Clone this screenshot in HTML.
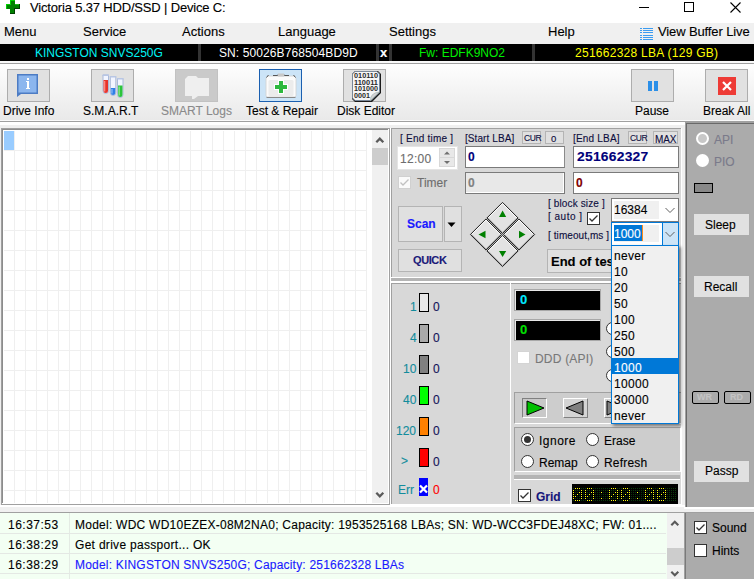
<!DOCTYPE html>
<html><head><meta charset="utf-8">
<style>
*{margin:0;padding:0;box-sizing:border-box}
html,body{width:754px;height:579px;overflow:hidden;background:#f0f0f0;font-family:"Liberation Sans",sans-serif;font-size:12px;color:#000}
.a{position:absolute}
.t{position:absolute;white-space:nowrap;line-height:1;-webkit-text-stroke:0.12px currentColor}
</style></head><body>
<!-- title bar -->
<div class="a" style="left:0;top:0;width:754px;height:23px;background:#fff"></div>
<svg class="a" style="left:6px;top:0" width="14" height="14" viewBox="0 0 14 14">
<path d="M4 0H9V4H14V9H9V14H4V9H0V4H4Z" fill="#008000"/>
<path d="M4 0H9V1H5V5H1V9H0V4H4Z" fill="#00d000"/>
<path d="M9 4H14V9H13V5H9Z" fill="#30ff30" opacity="0.5"/>
<path d="M13 4H14V9H9V14H4V13H8V8H13Z" fill="#004000"/>
</svg>
<div class="t" style="left:30px;top:1px;font-size:13px;letter-spacing:-0.17px">Victoria 5.37 HDD/SSD | Device C:</div>

<!-- window controls -->
<div class="a" style="left:639px;top:7px;width:10px;height:1px;background:#000"></div>
<div class="a" style="left:684px;top:2px;width:10px;height:10px;border:1px solid #000"></div>
<svg class="a" style="left:730px;top:2px" width="11" height="11" viewBox="0 0 11 11"><path d="M0.5 0.5L10.5 10.5M10.5 0.5L0.5 10.5" stroke="#000" stroke-width="1.1"/></svg>

<!-- menu bar -->
<div class="a" style="left:0;top:23px;width:754px;height:21px;background:#f0f0f0"></div>
<div class="t" style="left:4px;top:25px;font-size:13px">Menu</div>
<div class="t" style="left:83px;top:25px;font-size:13px">Service</div>
<div class="t" style="left:182px;top:25px;font-size:13px">Actions</div>
<div class="t" style="left:278px;top:25px;font-size:13px">Language</div>
<div class="t" style="left:389px;top:25px;font-size:13px">Settings</div>
<div class="t" style="left:548px;top:25px;font-size:13px">Help</div>
<div class="t" style="left:658px;top:25px;font-size:13px;letter-spacing:-0.12px">View Buffer Live</div>
<svg class="a" style="left:640px;top:27px" width="14" height="14" viewBox="0 0 14 14">
<g fill="#3c9cf0"><rect x="0" y="1" width="2" height="1"/><rect x="3" y="1" width="10" height="1"/>
<rect x="0" y="3" width="2" height="1"/><rect x="3" y="3" width="10" height="1"/>
<rect x="0" y="5" width="2" height="1"/><rect x="3" y="5" width="10" height="1"/>
<rect x="0" y="8" width="2" height="1"/><rect x="3" y="8" width="10" height="1"/>
<rect x="0" y="10" width="2" height="1"/><rect x="3" y="10" width="10" height="1"/>
<rect x="0" y="12" width="2" height="1"/><rect x="3" y="12" width="10" height="1"/></g></svg>
<!-- info bar -->
<div class="a" style="left:0;top:44px;width:754px;height:17px;background:#000"></div>
<div class="t" style="left:35px;top:47px;font-size:12px;color:#00f4f4;-webkit-text-stroke:0">KINGSTON SNVS250G</div>
<div class="a" style="left:198px;top:44px;width:3px;height:17px;background:#333"></div>
<div class="t" style="left:219px;top:47px;font-size:12px;color:#fff;-webkit-text-stroke:0;letter-spacing:0.1px">SN: 50026B768504BD9D</div>
<div class="a" style="left:376px;top:44px;width:3px;height:17px;background:#333"></div>
<div class="t" style="left:380px;top:46px;font-size:13px;font-weight:bold;color:#fff">x</div>
<div class="a" style="left:389px;top:44px;width:3px;height:17px;background:#333"></div>
<div class="t" style="left:419px;top:47px;font-size:12px;color:#00f000;-webkit-text-stroke:0">Fw: EDFK9NO2</div>
<div class="a" style="left:532px;top:44px;width:3px;height:17px;background:#333"></div>
<div class="t" style="left:575px;top:47px;font-size:12px;color:#ffff00;-webkit-text-stroke:0;letter-spacing:0.27px">251662328 LBA (129 GB)</div>
<!-- toolbar -->
<div class="a" style="left:0;top:61px;width:754px;height:2px;background:#f8f8f8"></div>
<div class="a" style="left:0;top:63px;width:754px;height:1px;background:#a0a0a0"></div>
<div class="a" style="left:0;top:64px;width:754px;height:56px;background:linear-gradient(#fefefe,#e9e9e9)"></div><div class="a" style="left:0;top:120px;width:754px;height:1px;background:#fafafa"></div>
<div class="a" style="left:0;top:121px;width:754px;height:1px;background:#a0a0a0"></div>
<div class="a" style="left:0;top:122px;width:754px;height:3px;background:#e8e8e8"></div>
<div class="a" style="left:0;top:125px;width:754px;height:3px;background:#fff"></div>


<!-- main bg -->
<div class="a" style="left:0;top:122px;width:754px;height:3px;background:#fff"></div>
<div class="a" style="left:0;top:125px;width:685px;height:388px;background:#f0f0f0"></div>
<!-- left grid panel -->
<div class="a" style="left:1px;top:128px;width:389px;height:377px;background:#a0a0a0"></div>
<div class="a" style="left:2px;top:129px;width:387px;height:375px;background:#fff"></div>
<div class="a" style="left:2px;top:129px;width:386px;height:374px;background:#8c8c8c"></div>
<div class="a" style="left:3px;top:130px;width:369px;height:373px;background:#fff"></div>
<div class="a" style="left:3px;top:130px;width:364px;height:373px;background-color:#fff;background-image:linear-gradient(to right,rgba(0,0,0,0) 10px,#efefef 10px),linear-gradient(to bottom,rgba(0,0,0,0) 19px,#efefef 19px);background-size:11px 20px,11px 20px;background-position:1px 1px,1px 1px"></div>
<div class="a" style="left:3px;top:130px;width:1px;height:373px;background:#fff"></div>
<div class="a" style="left:3px;top:130px;width:369px;height:1px;background:#fff"></div>
<div class="a" style="left:4px;top:131px;width:10px;height:19px;background:#99ccff"></div>
<!-- grid scrollbar -->
<div class="a" style="left:372px;top:130px;width:16px;height:373px;background:#f0f0f0"></div>
<div class="a" style="left:372px;top:148px;width:16px;height:17px;background:#cdcdcd"></div>
<svg class="a" style="left:375px;top:136px" width="10" height="8" viewBox="0 0 10 8"><path d="M1.3 6.2L4.8 2.7L8.3 6.2" fill="none" stroke="#5a5a5a" stroke-width="2.3"/></svg>
<svg class="a" style="left:375px;top:491px" width="10" height="8" viewBox="0 0 10 8"><path d="M1.3 1.8L4.8 5.3L8.3 1.8" fill="none" stroke="#5a5a5a" stroke-width="2.3"/></svg>

<!-- right panel -->
<div class="a" style="left:390px;top:128px;width:292px;height:379px;background:#fff"></div>
<div class="a" style="left:391px;top:128px;width:290px;height:376px;background:#a0a0a0"></div>
<div class="a" style="left:392px;top:129px;width:289px;height:375px;background:#d8d8d8"></div>
<!-- top section separator -->
<div class="a" style="left:391px;top:277px;width:290px;height:1px;background:#fff"></div>
<div class="a" style="left:391px;top:278px;width:290px;height:3px;background:#b4b4b4"></div>
<div class="a" style="left:391px;top:281px;width:290px;height:2px;background:#fff"></div>
<div class="a" style="left:391px;top:283px;width:290px;height:1px;background:#a0a0a0"></div>
<div class="a" style="left:510px;top:283px;width:1px;height:221px;background:#fff"></div>

<!-- far right panel -->
<div class="a" style="left:685px;top:122px;width:69px;height:385px;background:#a0a0a0"></div>
<div class="a" style="left:686px;top:123px;width:68px;height:384px;background:#696969"></div>
<div class="a" style="left:687px;top:124px;width:67px;height:383px;background:#ababab"></div>
<div class="a" style="left:684px;top:507px;width:70px;height:2px;background:#fff"></div>
<div class="a" style="left:684px;top:509px;width:70px;height:3px;background:#f0f0f0"></div>
<div class="a" style="left:684px;top:512px;width:70px;height:1px;background:#a0a0a0"></div>

<!-- log -->
<div class="a" style="left:0;top:505px;width:685px;height:2px;background:#fff"></div>
<div class="a" style="left:0;top:512px;width:685px;height:1px;background:#a0a0a0"></div>
<div class="a" style="left:0;top:513px;width:684px;height:66px;background:#f3fff3"></div>
<div class="a" style="left:684px;top:513px;width:1px;height:66px;background:#a0a0a0"></div>
<div class="a" style="left:685px;top:513px;width:69px;height:66px;background:#ababab;border-left:1px solid #7a7a7a"></div>


<!-- RIGHT PANEL TOP -->
<div class="t" style="left:400px;top:134px;font-size:10px;letter-spacing:0.23px;color:#0e0e3e">[ End time ]</div>
<div class="a" style="left:397px;top:146px;width:61px;height:24px;background:#fff;border:1px solid #e4e4e4"></div>
<div class="t" style="left:400px;top:153px;font-size:12px;letter-spacing:0.3px;color:#6d6d6d">12:00</div>
<div class="a" style="left:439px;top:148px;width:16px;height:19px;background:#d8d8d8"></div><div class="a" style="left:440px;top:149px;width:14px;height:8px;background:#e8e8e8"></div>
<div class="a" style="left:440px;top:158px;width:14px;height:8px;background:#e8e8e8"></div>
<svg class="a" style="left:440px;top:149px" width="14" height="17" viewBox="0 0 14 17"><path d="M4 5.5L7 2.5L10 5.5Z" fill="#707070"/><path d="M4 12L7 15L10 12Z" fill="#707070"/></svg>
<div class="a" style="left:398px;top:176px;width:13px;height:13px;background:#fafafa;border:1px solid #d0d0d0"></div>
<svg class="a" style="left:398px;top:176px" width="13" height="13" viewBox="0 0 13 13"><path d="M2.5 6.5L5 9L10.5 3.5" fill="none" stroke="#c0c0c0" stroke-width="1.3"/></svg>
<div class="t" style="left:417px;top:177px;font-size:12px;color:#6d6d6d">Timer</div>

<div class="t" style="left:465px;top:134px;font-size:10px;letter-spacing:0.08px;color:#0e0e3e">[Start LBA]</div>
<div class="a" style="left:522px;top:131px;width:19px;height:13px;background:#e0e0e0;border:1px solid #b4b4b4"></div>
<div class="t" style="left:524px;top:134px;font-size:8.5px;letter-spacing:-0.35px;color:#0e0e3e">CUR</div>
<div class="a" style="left:545px;top:131px;width:19px;height:13px;background:#e0e0e0;border:1px solid #b4b4b4"></div>
<div class="t" style="left:551px;top:134px;font-size:9.5px;color:#0e0e3e">0</div>
<div class="a" style="left:465px;top:146px;width:100px;height:22px;background:#fff;border:1px solid #7a7a7a;border-right-color:#8a8a8a"></div>
<div class="t" style="left:468px;top:151px;font-size:12px;font-weight:bold;color:#00007a">0</div>
<div class="a" style="left:465px;top:172px;width:100px;height:22px;background:#e8e8e8;border:1px solid #7a7a7a;box-shadow:inset -1px -1px 0 #fff"></div>
<div class="t" style="left:468px;top:177px;font-size:12px;font-weight:bold;color:#808080">0</div>

<div class="t" style="left:573px;top:134px;font-size:10px;letter-spacing:0.19px;color:#0e0e3e">[End LBA]</div>
<div class="a" style="left:628px;top:131px;width:19px;height:13px;background:#e0e0e0;border:1px solid #b4b4b4"></div>
<div class="t" style="left:630px;top:134px;font-size:8.5px;letter-spacing:-0.35px;color:#0e0e3e">CUR</div>
<div class="a" style="left:653px;top:131px;width:25px;height:13px;background:#e0e0e0;border:1px solid #b4b4b4"></div>
<div class="t" style="left:655px;top:135px;font-size:10px;letter-spacing:-0.1px;color:#0e0e3e">MAX</div>
<div class="a" style="left:573px;top:146px;width:106px;height:22px;background:#fff;border:1px solid #7a7a7a"></div>
<div class="t" style="left:577px;top:151px;font-size:12px;font-weight:bold;letter-spacing:0.2px;transform:scaleX(1.155);transform-origin:0 0;color:#00007a">251662327</div>
<div class="a" style="left:573px;top:172px;width:106px;height:22px;background:#fff;border:1px solid #7a7a7a"></div>
<div class="t" style="left:576px;top:177px;font-size:12px;font-weight:bold;color:#800000">0</div>

<!-- scan buttons -->
<div class="a" style="left:398px;top:206px;width:45px;height:36px;background:#e0e0e0;border:1px solid #b4b4b4"></div>
<div class="t" style="left:407px;top:218px;font-size:12px;font-weight:bold;color:#1a1aff">Scan</div>
<div class="a" style="left:444px;top:206px;width:18px;height:36px;background:#e0e0e0;border:1px solid #b4b4b4"></div>
<svg class="a" style="left:446px;top:222px" width="12" height="7" viewBox="0 0 12 7"><path d="M1.5 0.5H9.5L5.5 5Z" fill="#000"/></svg>
<div class="a" style="left:398px;top:249px;width:64px;height:23px;background:#e0e0e0;border:1px solid #b4b4b4"></div>
<div class="t" style="left:413px;top:255px;font-size:11px;font-weight:bold;letter-spacing:-0.4px;color:#1a1a7a">QUICK</div>

<!-- diamond -->
<svg class="a" style="left:468px;top:200px" width="70" height="70" viewBox="0 0 70 70"><path d="M34.5 1.5L67.5 34.5L34.5 67.5L1.5 34.5Z" fill="#d8d8d8"/><path d="M34.5 2.4000000000000004L50.1 18.0L34.5 33.6L18.9 18.0Z" fill="#e2e2e2" stroke="#1a1a1a" stroke-width="1"/><path d="M20.1 18.0L34.5 3.5999999999999996L48.9 18.0" fill="none" stroke="#ffffff" stroke-width="1"/><path d="M20.1 18.0L34.5 32.4L48.9 18.0" fill="none" stroke="#a0a0a0" stroke-width="1"/><path d="M51.0 18.9L66.6 34.5L51.0 50.1L35.4 34.5Z" fill="#e2e2e2" stroke="#1a1a1a" stroke-width="1"/><path d="M36.6 34.5L51.0 20.1L65.4 34.5" fill="none" stroke="#ffffff" stroke-width="1"/><path d="M36.6 34.5L51.0 48.9L65.4 34.5" fill="none" stroke="#a0a0a0" stroke-width="1"/><path d="M34.5 35.4L50.1 51.0L34.5 66.6L18.9 51.0Z" fill="#e2e2e2" stroke="#1a1a1a" stroke-width="1"/><path d="M20.1 51.0L34.5 36.6L48.9 51.0" fill="none" stroke="#ffffff" stroke-width="1"/><path d="M20.1 51.0L34.5 65.4L48.9 51.0" fill="none" stroke="#a0a0a0" stroke-width="1"/><path d="M18.0 18.9L33.6 34.5L18.0 50.1L2.4000000000000004 34.5Z" fill="#e2e2e2" stroke="#1a1a1a" stroke-width="1"/><path d="M3.5999999999999996 34.5L18.0 20.1L32.4 34.5" fill="none" stroke="#ffffff" stroke-width="1"/><path d="M3.5999999999999996 34.5L18.0 48.9L32.4 34.5" fill="none" stroke="#a0a0a0" stroke-width="1"/><path d="M34.6 10.5L38.2 17H31Z" fill="#008000"/><path d="M34.6 57L38.2 51H31Z" fill="#008000"/><path d="M10.5 34.5L17.5 30.8V38.2Z" fill="#008000"/><path d="M57.5 34.5L51 30.8V38.2Z" fill="#008000"/></svg>

<div class="t" style="left:548px;top:199px;font-size:10px;letter-spacing:0.13px;color:#0e0e3e">[ block size ]</div>
<div class="t" style="left:548px;top:212px;font-size:10px;letter-spacing:0.5px;color:#0e0e3e">[ auto ]</div>
<div class="a" style="left:587px;top:212px;width:13px;height:13px;background:#fff;border:1px solid #333"></div>
<svg class="a" style="left:587px;top:212px" width="13" height="13" viewBox="0 0 13 13"><path d="M2.5 6.5L5 9L10.5 3.5" fill="none" stroke="#333" stroke-width="1.3"/></svg>
<div class="t" style="left:548px;top:231px;font-size:10px;letter-spacing:0.08px;color:#0e0e3e">[ timeout,ms ]</div>
<div class="a" style="left:547px;top:249px;width:70px;height:24px;background:#e0e0e0;border:1px solid #b4b4b4"></div>
<div class="t" style="left:551px;top:255px;font-size:13px;font-weight:bold;color:#000">End of test</div>

<!-- combos -->
<div class="a" style="left:611px;top:198px;width:68px;height:24px;background:#fff;border:1px solid #7a7a7a"></div>
<div class="a" style="left:614px;top:201px;width:45px;height:18px;background:#f0f0f0"></div>
<div class="t" style="left:614px;top:204px;font-size:12px;color:#000">16384</div>
<svg class="a" style="left:664px;top:206px" width="12" height="8" viewBox="0 0 12 8"><path d="M1.5 2L6 6.5L10.5 2" fill="none" stroke="#606060" stroke-width="1"/></svg>
<div class="a" style="left:611px;top:222px;width:68px;height:24px;background:#fff;border:1px solid #0078d7"></div>
<div class="a" style="left:614px;top:225px;width:45px;height:17px;background:#f0f0f0"></div>
<div class="a" style="left:614px;top:225px;width:28px;height:16px;background:#0078d7"></div>
<div class="a" style="left:642px;top:225px;width:1px;height:16px;background:#ff8c1a"></div>
<div class="t" style="left:614px;top:228px;font-size:12px;color:#fff">1000</div>
<div class="a" style="left:662px;top:222px;width:17px;height:24px;background:#cce4f7;border:1px solid #0078d7"></div>
<svg class="a" style="left:664px;top:230px" width="12" height="8" viewBox="0 0 12 8"><path d="M1.5 2L6 6.5L10.5 2" fill="none" stroke="#606060" stroke-width="1"/></svg>


<!-- MIDDLE LEFT counts -->
<div class="t" style="left:410px;top:301px;font-size:12px;color:#128c9c">1</div>
<div class="a" style="left:419px;top:293px;width:10px;height:19px;background:#e8e8e8;border:1px solid #000"></div>
<div class="t" style="left:433px;top:301px;font-size:12px;color:#14145a">0</div>
<div class="t" style="left:410px;top:332px;font-size:12px;color:#128c9c">4</div>
<div class="a" style="left:419px;top:324px;width:10px;height:19px;background:#a9a9a9;border:1px solid #000"></div>
<div class="t" style="left:433px;top:332px;font-size:12px;color:#14145a">0</div>
<div class="t" style="left:403px;top:363px;font-size:12px;color:#128c9c">10</div>
<div class="a" style="left:419px;top:355px;width:10px;height:19px;background:#808080;border:1px solid #000"></div>
<div class="t" style="left:433px;top:363px;font-size:12px;color:#14145a">0</div>
<div class="t" style="left:403px;top:394px;font-size:12px;color:#128c9c">40</div>
<div class="a" style="left:419px;top:386px;width:10px;height:19px;background:#00ff00;border:1px solid #000"></div>
<div class="t" style="left:433px;top:394px;font-size:12px;color:#14145a">0</div>
<div class="t" style="left:396px;top:425px;font-size:12px;color:#128c9c">120</div>
<div class="a" style="left:419px;top:417px;width:10px;height:19px;background:#ff8000;border:1px solid #000"></div>
<div class="t" style="left:433px;top:425px;font-size:12px;color:#14145a">0</div>
<div class="t" style="left:401px;top:455px;font-size:12px;color:#128c9c">&gt;</div>
<div class="a" style="left:419px;top:448px;width:10px;height:19px;background:#ff0000;border:1px solid #000"></div>
<div class="t" style="left:433px;top:456px;font-size:12px;color:#14145a">0</div>
<div class="t" style="left:398px;top:484px;font-size:12px;color:#128c9c">Err</div>
<div class="a" style="left:419px;top:478px;width:9px;height:18px;background:#0000ff"></div>
<svg class="a" style="left:419px;top:484px" width="9" height="10" viewBox="0 0 9 10"><path d="M1 1.5L8 8.5M8 1.5L1 8.5" stroke="#fff" stroke-width="2.2"/></svg>
<div class="t" style="left:433px;top:484px;font-size:12px;color:#ff0000">0</div>

<!-- MIDDLE RIGHT -->
<div class="a" style="left:514px;top:289px;width:87px;height:22px;background:#000;border:1px solid #a8a8a8;box-shadow:inset 1px 1px 0 #e8e8e8"></div>
<div class="t" style="left:520px;top:293px;font-size:13px;font-weight:bold;color:#00e8ff">0</div>
<div class="a" style="left:514px;top:319px;width:87px;height:22px;background:#000;border:1px solid #a8a8a8;box-shadow:inset 1px 1px 0 #e8e8e8"></div>
<div class="t" style="left:520px;top:323px;font-size:13px;font-weight:bold;color:#00e000">0</div>
<div class="a" style="left:517px;top:351px;width:13px;height:13px;background:#fff;border:1px solid #d4d4d4"></div>
<div class="t" style="left:535px;top:353px;font-size:12px;letter-spacing:0.2px;color:#787878">DDD (API)</div>
<div class="a" style="left:606px;top:322px;width:13px;height:13px;border-radius:50%;background:#fff;border:1px solid #333"></div>
<div class="a" style="left:606px;top:345px;width:13px;height:13px;border-radius:50%;background:#fff;border:1px solid #333"></div>
<div class="a" style="left:606px;top:369px;width:13px;height:13px;border-radius:50%;background:#fff;border:1px solid #333"></div>

<!-- player -->
<div class="a" style="left:514px;top:392px;width:167px;height:32px;background:#cdcdcd;border-top:1px solid #a0a0a0;border-left:1px solid #a0a0a0;border-bottom:1px solid #fff"></div>
<div class="a" style="left:522px;top:398px;width:25px;height:20px;background:#c8c8c8;border-top:1px solid #808080;border-left:1px solid #808080;border-bottom:1px solid #fff;border-right:1px solid #fff"></div>
<svg class="a" style="left:526px;top:400px" width="19" height="16" viewBox="0 0 19 16"><path d="M1 1L18 8L1 15Z" fill="#00c000" stroke="#000" stroke-width="1"/></svg>
<div class="a" style="left:563px;top:398px;width:25px;height:20px;background:#d4d4d4;border-top:1px solid #fff;border-left:1px solid #fff;border-bottom:1px solid #808080;border-right:1px solid #808080"></div>
<svg class="a" style="left:565px;top:400px" width="19" height="16" viewBox="0 0 19 16"><path d="M18 1L1 8L18 15Z" fill="#808080" stroke="#000" stroke-width="1"/></svg>
<div class="a" style="left:604px;top:398px;width:25px;height:20px;background:#d4d4d4;border-top:1px solid #fff;border-left:1px solid #fff;border-bottom:1px solid #808080;border-right:1px solid #808080"></div>
<svg class="a" style="left:606px;top:400px" width="19" height="16" viewBox="0 0 19 16"><path d="M1 1L18 8L1 15Z" fill="#808080" stroke="#000" stroke-width="1"/></svg>

<!-- radios -->
<div class="a" style="left:514px;top:427px;width:167px;height:45px;background:#cdcdcd;border-top:1px solid #a0a0a0;border-left:1px solid #a0a0a0;border-bottom:1px solid #fff;border-right:1px solid #fff"></div>
<div class="a" style="left:521px;top:433px;width:13px;height:13px;border-radius:50%;background:#fff;border:1px solid #333"></div>
<div class="a" style="left:524px;top:436px;width:7px;height:7px;border-radius:50%;background:#333"></div>
<div class="t" style="left:539px;top:435px;font-size:12px;letter-spacing:0.5px;color:#000">Ignore</div>
<div class="a" style="left:586px;top:433px;width:13px;height:13px;border-radius:50%;background:#fff;border:1px solid #333"></div>
<div class="t" style="left:604px;top:435px;font-size:12px;color:#000">Erase</div>
<div class="a" style="left:521px;top:455px;width:13px;height:13px;border-radius:50%;background:#fff;border:1px solid #333"></div>
<div class="t" style="left:539px;top:457px;font-size:12px;color:#000">Remap</div>
<div class="a" style="left:586px;top:455px;width:13px;height:13px;border-radius:50%;background:#fff;border:1px solid #333"></div>
<div class="t" style="left:604px;top:457px;font-size:12px;letter-spacing:0.2px;color:#000">Refresh</div>
<!-- progress -->
<div class="a" style="left:514px;top:475px;width:166px;height:4px;background:#b4b4b4"></div>
<div class="a" style="left:514px;top:479px;width:166px;height:1px;background:#fff"></div>
<!-- grid check + timer -->
<div class="a" style="left:518px;top:489px;width:13px;height:13px;background:#fff;border:1px solid #333"></div>
<svg class="a" style="left:518px;top:489px" width="13" height="13" viewBox="0 0 13 13"><path d="M2.5 6.5L5 9L10.5 3.5" fill="none" stroke="#333" stroke-width="1.3"/></svg>
<div class="t" style="left:536px;top:491px;font-size:12px;font-weight:bold;color:#14147a">Grid</div>
<svg class="a" style="left:572px;top:483px" width="106" height="21" viewBox="0 0 106 21"><rect x="0" y="1" width="106" height="20" fill="#000"/><path d="M1 5h1v1h-1zM1 17h1v1h-1zM3 7h1v1h-1zM3 9h1v1h-1zM3 11h1v1h-1zM3 15h1v1h-1zM5 7h1v1h-1zM5 9h1v1h-1zM5 13h1v1h-1zM5 15h1v1h-1zM7 7h1v1h-1zM7 11h1v1h-1zM7 13h1v1h-1zM7 15h1v1h-1zM9 5h1v1h-1zM9 17h1v1h-1zM11 5h1v1h-1zM11 7h1v1h-1zM11 9h1v1h-1zM11 11h1v1h-1zM11 13h1v1h-1zM11 15h1v1h-1zM11 17h1v1h-1zM13 5h1v1h-1zM13 17h1v1h-1zM15 7h1v1h-1zM15 9h1v1h-1zM15 11h1v1h-1zM15 15h1v1h-1zM17 7h1v1h-1zM17 9h1v1h-1zM17 13h1v1h-1zM17 15h1v1h-1zM19 7h1v1h-1zM19 11h1v1h-1zM19 13h1v1h-1zM19 15h1v1h-1zM21 5h1v1h-1zM21 17h1v1h-1zM23 5h1v1h-1zM23 7h1v1h-1zM23 9h1v1h-1zM23 11h1v1h-1zM23 13h1v1h-1zM23 15h1v1h-1zM23 17h1v1h-1zM25 5h1v1h-1zM25 7h1v1h-1zM25 9h1v1h-1zM25 11h1v1h-1zM25 13h1v1h-1zM25 15h1v1h-1zM25 17h1v1h-1zM27 5h1v1h-1zM27 7h1v1h-1zM27 9h1v1h-1zM27 11h1v1h-1zM27 13h1v1h-1zM27 15h1v1h-1zM27 17h1v1h-1zM29 5h1v1h-1zM29 7h1v1h-1zM29 11h1v1h-1zM29 13h1v1h-1zM29 17h1v1h-1zM31 5h1v1h-1zM31 7h1v1h-1zM31 9h1v1h-1zM31 11h1v1h-1zM31 13h1v1h-1zM31 15h1v1h-1zM31 17h1v1h-1zM33 5h1v1h-1zM33 7h1v1h-1zM33 9h1v1h-1zM33 11h1v1h-1zM33 13h1v1h-1zM33 15h1v1h-1zM33 17h1v1h-1zM35 5h1v1h-1zM35 7h1v1h-1zM35 9h1v1h-1zM35 11h1v1h-1zM35 13h1v1h-1zM35 15h1v1h-1zM35 17h1v1h-1zM37 5h1v1h-1zM37 17h1v1h-1zM39 7h1v1h-1zM39 9h1v1h-1zM39 11h1v1h-1zM39 15h1v1h-1zM41 7h1v1h-1zM41 9h1v1h-1zM41 13h1v1h-1zM41 15h1v1h-1zM43 7h1v1h-1zM43 11h1v1h-1zM43 13h1v1h-1zM43 15h1v1h-1zM45 5h1v1h-1zM45 17h1v1h-1zM47 5h1v1h-1zM47 7h1v1h-1zM47 9h1v1h-1zM47 11h1v1h-1zM47 13h1v1h-1zM47 15h1v1h-1zM47 17h1v1h-1zM49 5h1v1h-1zM49 17h1v1h-1zM51 7h1v1h-1zM51 9h1v1h-1zM51 11h1v1h-1zM51 15h1v1h-1zM53 7h1v1h-1zM53 9h1v1h-1zM53 13h1v1h-1zM53 15h1v1h-1zM55 7h1v1h-1zM55 11h1v1h-1zM55 13h1v1h-1zM55 15h1v1h-1zM57 5h1v1h-1zM57 17h1v1h-1zM59 5h1v1h-1zM59 7h1v1h-1zM59 9h1v1h-1zM59 11h1v1h-1zM59 13h1v1h-1zM59 15h1v1h-1zM59 17h1v1h-1zM61 5h1v1h-1zM61 7h1v1h-1zM61 9h1v1h-1zM61 11h1v1h-1zM61 13h1v1h-1zM61 15h1v1h-1zM61 17h1v1h-1zM63 5h1v1h-1zM63 7h1v1h-1zM63 9h1v1h-1zM63 11h1v1h-1zM63 13h1v1h-1zM63 15h1v1h-1zM63 17h1v1h-1zM65 5h1v1h-1zM65 7h1v1h-1zM65 11h1v1h-1zM65 13h1v1h-1zM65 17h1v1h-1zM67 5h1v1h-1zM67 7h1v1h-1zM67 9h1v1h-1zM67 11h1v1h-1zM67 13h1v1h-1zM67 15h1v1h-1zM67 17h1v1h-1zM69 5h1v1h-1zM69 7h1v1h-1zM69 9h1v1h-1zM69 11h1v1h-1zM69 13h1v1h-1zM69 15h1v1h-1zM69 17h1v1h-1zM71 5h1v1h-1zM71 7h1v1h-1zM71 9h1v1h-1zM71 11h1v1h-1zM71 13h1v1h-1zM71 15h1v1h-1zM71 17h1v1h-1zM73 5h1v1h-1zM73 17h1v1h-1zM75 7h1v1h-1zM75 9h1v1h-1zM75 11h1v1h-1zM75 15h1v1h-1zM77 7h1v1h-1zM77 9h1v1h-1zM77 13h1v1h-1zM77 15h1v1h-1zM79 7h1v1h-1zM79 11h1v1h-1zM79 13h1v1h-1zM79 15h1v1h-1zM81 5h1v1h-1zM81 17h1v1h-1zM83 5h1v1h-1zM83 7h1v1h-1zM83 9h1v1h-1zM83 11h1v1h-1zM83 13h1v1h-1zM83 15h1v1h-1zM83 17h1v1h-1zM85 5h1v1h-1zM85 17h1v1h-1zM87 7h1v1h-1zM87 9h1v1h-1zM87 11h1v1h-1zM87 15h1v1h-1zM89 7h1v1h-1zM89 9h1v1h-1zM89 13h1v1h-1zM89 15h1v1h-1zM91 7h1v1h-1zM91 11h1v1h-1zM91 13h1v1h-1zM91 15h1v1h-1zM93 5h1v1h-1zM93 17h1v1h-1zM95 5h1v1h-1zM95 7h1v1h-1zM95 9h1v1h-1zM95 11h1v1h-1zM95 13h1v1h-1zM95 15h1v1h-1zM95 17h1v1h-1zM97 5h1v1h-1zM97 7h1v1h-1zM97 9h1v1h-1zM97 11h1v1h-1zM97 13h1v1h-1zM97 15h1v1h-1zM97 17h1v1h-1zM99 5h1v1h-1zM99 7h1v1h-1zM99 9h1v1h-1zM99 11h1v1h-1zM99 13h1v1h-1zM99 15h1v1h-1zM99 17h1v1h-1zM101 5h1v1h-1zM101 7h1v1h-1zM101 9h1v1h-1zM101 11h1v1h-1zM101 13h1v1h-1zM101 15h1v1h-1zM101 17h1v1h-1zM103 5h1v1h-1zM103 7h1v1h-1zM103 9h1v1h-1zM103 11h1v1h-1zM103 13h1v1h-1zM103 15h1v1h-1zM103 17h1v1h-1z" fill="#0a3a0a"/><path d="M1 7h1v1h-1zM1 9h1v1h-1zM1 11h1v1h-1zM1 13h1v1h-1zM1 15h1v1h-1zM3 5h1v1h-1zM3 13h1v1h-1zM3 17h1v1h-1zM5 5h1v1h-1zM5 11h1v1h-1zM5 17h1v1h-1zM7 5h1v1h-1zM7 9h1v1h-1zM7 17h1v1h-1zM9 7h1v1h-1zM9 9h1v1h-1zM9 11h1v1h-1zM9 13h1v1h-1zM9 15h1v1h-1zM13 7h1v1h-1zM13 9h1v1h-1zM13 11h1v1h-1zM13 13h1v1h-1zM13 15h1v1h-1zM15 5h1v1h-1zM15 13h1v1h-1zM15 17h1v1h-1zM17 5h1v1h-1zM17 11h1v1h-1zM17 17h1v1h-1zM19 5h1v1h-1zM19 9h1v1h-1zM19 17h1v1h-1zM21 7h1v1h-1zM21 9h1v1h-1zM21 11h1v1h-1zM21 13h1v1h-1zM21 15h1v1h-1zM29 9h1v1h-1zM29 15h1v1h-1zM37 7h1v1h-1zM37 9h1v1h-1zM37 11h1v1h-1zM37 13h1v1h-1zM37 15h1v1h-1zM39 5h1v1h-1zM39 13h1v1h-1zM39 17h1v1h-1zM41 5h1v1h-1zM41 11h1v1h-1zM41 17h1v1h-1zM43 5h1v1h-1zM43 9h1v1h-1zM43 17h1v1h-1zM45 7h1v1h-1zM45 9h1v1h-1zM45 11h1v1h-1zM45 13h1v1h-1zM45 15h1v1h-1zM49 7h1v1h-1zM49 9h1v1h-1zM49 11h1v1h-1zM49 13h1v1h-1zM49 15h1v1h-1zM51 5h1v1h-1zM51 13h1v1h-1zM51 17h1v1h-1zM53 5h1v1h-1zM53 11h1v1h-1zM53 17h1v1h-1zM55 5h1v1h-1zM55 9h1v1h-1zM55 17h1v1h-1zM57 7h1v1h-1zM57 9h1v1h-1zM57 11h1v1h-1zM57 13h1v1h-1zM57 15h1v1h-1zM65 9h1v1h-1zM65 15h1v1h-1zM73 7h1v1h-1zM73 9h1v1h-1zM73 11h1v1h-1zM73 13h1v1h-1zM73 15h1v1h-1zM75 5h1v1h-1zM75 13h1v1h-1zM75 17h1v1h-1zM77 5h1v1h-1zM77 11h1v1h-1zM77 17h1v1h-1zM79 5h1v1h-1zM79 9h1v1h-1zM79 17h1v1h-1zM81 7h1v1h-1zM81 9h1v1h-1zM81 11h1v1h-1zM81 13h1v1h-1zM81 15h1v1h-1zM85 7h1v1h-1zM85 9h1v1h-1zM85 11h1v1h-1zM85 13h1v1h-1zM85 15h1v1h-1zM87 5h1v1h-1zM87 13h1v1h-1zM87 17h1v1h-1zM89 5h1v1h-1zM89 11h1v1h-1zM89 17h1v1h-1zM91 5h1v1h-1zM91 9h1v1h-1zM91 17h1v1h-1zM93 7h1v1h-1zM93 9h1v1h-1zM93 11h1v1h-1zM93 13h1v1h-1zM93 15h1v1h-1z" fill="#ffff10"/></svg>

<!-- dropdown list -->
<div class="a" style="left:611px;top:245px;width:68px;height:179px;background:#f0f0f0;border:1px solid #0078d7;box-shadow:2px 2px 3px rgba(0,0,0,0.45)"></div>
<div class="a" style="left:612px;top:358px;width:66px;height:16px;background:#0078d7"></div>
<div class="t" style="left:614px;top:248px;font-size:12px;line-height:16px;letter-spacing:0.3px;color:#000">never<br>10<br>20<br>50<br>100<br>250<br>500<br><span style="color:#fff">1000</span><br>10000<br>30000<br>never</div>

<!-- FAR RIGHT -->
<div class="a" style="left:696px;top:132px;width:13px;height:13px;border-radius:50%;background:#c8c8c8;border:2px solid #fff"></div>
<div class="t" style="left:714px;top:134px;font-size:12px;color:#7a7a8a">API</div>
<div class="a" style="left:696px;top:154px;width:13px;height:13px;border-radius:50%;background:#fff"></div>
<div class="t" style="left:714px;top:156px;font-size:12px;color:#7a7a8a">PIO</div>
<div class="a" style="left:694px;top:183px;width:19px;height:10px;background:#888;border:1px solid #000"></div>
<div class="a" style="left:694px;top:214px;width:55px;height:21px;background:#e1e1e1"></div>
<div class="t" style="left:705px;top:219px;font-size:12px;color:#000">Sleep</div>
<div class="a" style="left:694px;top:276px;width:55px;height:21px;background:#e1e1e1"></div>
<div class="t" style="left:704px;top:281px;font-size:12px;color:#000">Recall</div>
<div class="a" style="left:692px;top:391px;width:27px;height:13px;border:1px solid #000;border-radius:2px"></div>
<div class="t" style="left:697px;top:393px;font-size:9px;font-weight:bold;color:#c4c4c4">WR</div>
<div class="a" style="left:724px;top:391px;width:27px;height:13px;border:1px solid #000;border-radius:2px"></div>
<div class="t" style="left:730px;top:393px;font-size:9px;font-weight:bold;color:#c4c4c4">RD</div>
<div class="a" style="left:694px;top:461px;width:55px;height:21px;background:#e1e1e1"></div>
<div class="t" style="left:705px;top:465px;font-size:12px;color:#000">Passp</div>
<div class="a" style="left:694px;top:521px;width:13px;height:13px;background:#fff;border:1px solid #333"></div>
<svg class="a" style="left:694px;top:521px" width="13" height="13" viewBox="0 0 13 13"><path d="M2.5 6.5L5 9L10.5 3.5" fill="none" stroke="#333" stroke-width="1.3"/></svg>
<div class="t" style="left:712px;top:522px;font-size:12px;color:#000">Sound</div>
<div class="a" style="left:694px;top:544px;width:13px;height:13px;background:#fff;border:1px solid #333"></div>
<div class="t" style="left:712px;top:545px;font-size:12px;color:#000">Hints</div>

<!-- LOG -->
<div class="a" style="left:69px;top:513px;width:1px;height:66px;background:#e4ebe4"></div>
<div class="a" style="left:0;top:533px;width:666px;height:1px;background:#e4e8e4"></div>
<div class="a" style="left:0;top:553px;width:666px;height:1px;background:#e4e8e4"></div>
<div class="a" style="left:0;top:573px;width:666px;height:1px;background:#e4e8e4"></div>
<div class="t" style="left:8px;top:519px;font-size:12px;letter-spacing:0.5px;color:#000">16:37:53</div>
<div class="t" style="left:75px;top:519px;font-size:12px;letter-spacing:0.25px;color:#000">Model: WDC WD10EZEX-08M2NA0; Capacity: 1953525168 LBAs; SN: WD-WCC3FDEJ48XC; FW: 01....</div>
<div class="t" style="left:8px;top:539px;font-size:12px;letter-spacing:0.5px;color:#000">16:38:29</div>
<div class="t" style="left:75px;top:539px;font-size:12px;letter-spacing:0.3px;color:#000">Get drive passport... OK</div>
<div class="t" style="left:8px;top:559px;font-size:12px;letter-spacing:0.5px;color:#000">16:38:29</div>
<div class="t" style="left:75px;top:559px;font-size:12px;letter-spacing:0.2px;color:#1a1aff">Model: KINGSTON SNVS250G; Capacity: 251662328 LBAs</div>
<div class="a" style="left:667px;top:513px;width:17px;height:66px;background:#f0f0f0"></div>
<div class="a" style="left:667px;top:548px;width:17px;height:17px;background:#cdcdcd"></div>
<svg class="a" style="left:670px;top:519px" width="10" height="8" viewBox="0 0 10 8"><path d="M1.3 6.2L4.8 2.7L8.3 6.2" fill="none" stroke="#5a5a5a" stroke-width="2.1"/></svg>
<svg class="a" style="left:670px;top:570px" width="10" height="8" viewBox="0 0 10 8"><path d="M1.3 1.8L4.8 5.3L8.3 1.8" fill="none" stroke="#5a5a5a" stroke-width="2.1"/></svg>

<!-- toolbar buttons -->
<div class="a" style="left:7px;top:69px;width:43px;height:33px;background:#e1e1e1;border:1px solid #adadad"></div>
<svg class="a" style="left:16px;top:73px" width="24" height="25" viewBox="0 0 24 25">
 <path d="M1 1H22V21H5L1 24Z" fill="#4d7cc4"/>
 <rect x="2.5" y="2.5" width="18" height="17" fill="#8cb6ee"/>
 <rect x="11" y="5" width="2" height="2" fill="#fff"/>
 <path d="M10 8H13V15H14V16H10V15H11V9H10Z" fill="#fff"/>
</svg>
<div class="t" style="left:3px;top:105px;font-size:12px">Drive Info</div>

<div class="a" style="left:91px;top:69px;width:43px;height:33px;background:#e1e1e1;border:1px solid #adadad"></div>
<svg class="a" style="left:102px;top:74px" width="23" height="25" viewBox="0 0 23 25"><path d="M1 1H6.5V16.75A2.75 2.75 0 0 1 1 16.75Z" fill="#f2f5ff" stroke="#a9b9da" stroke-width="1"/><path d="M1.5 6H6.0V16.75A2.25 2.25 0 0 1 1.5 16.75Z" fill="#e8322a"/><rect x="2" y="7" width="1.3" height="10.5" fill="#ffb0a8" opacity="0.7"/><rect x="0.5" y="0.5" width="6.5" height="1.5" fill="#b8c6e4"/><path d="M8.3 2.5H13.8V18.75A2.75 2.75 0 0 1 8.3 18.75Z" fill="#f2f5ff" stroke="#a9b9da" stroke-width="1"/><path d="M8.8 14H13.3V18.75A2.25 2.25 0 0 1 8.8 18.75Z" fill="#2f7fe6"/><rect x="9.3" y="15" width="1.3" height="4.5" fill="#b0d4ff" opacity="0.7"/><rect x="7.800000000000001" y="2.0" width="6.5" height="1.5" fill="#b8c6e4"/><path d="M15.5 4.5H21.0V20.75A2.75 2.75 0 0 1 15.5 20.75Z" fill="#f2f5ff" stroke="#a9b9da" stroke-width="1"/><path d="M16.0 11.5H20.5V20.75A2.25 2.25 0 0 1 16.0 20.75Z" fill="#2cc43c"/><rect x="16.5" y="12.5" width="1.3" height="9.0" fill="#b8f5b8" opacity="0.7"/><rect x="15.0" y="4.0" width="6.5" height="1.5" fill="#b8c6e4"/></svg>
<div class="t" style="left:83px;top:105px;font-size:12px">S.M.A.R.T</div>

<div class="a" style="left:175px;top:69px;width:43px;height:33px;background:#cacaca;border:1px solid #c2c2c2"></div>
<svg class="a" style="left:185px;top:75px" width="25" height="25" viewBox="0 0 25 25">
 <path d="M0 4L3 1H11L13 3H24V21H13L9 24H7V21H0Z" fill="#efefef"/>
</svg>
<div class="t" style="left:161px;top:105px;font-size:12px;color:#8a8a8a">SMART Logs</div>

<div class="a" style="left:259px;top:69px;width:43px;height:33px;background:#cce4f7;border:1px solid #1a5fb0"></div>
<svg class="a" style="left:265px;top:72px" width="32" height="27" viewBox="0 0 32 27">
 <path d="M1 6L3 4H29L31 6V24L30 25H2L1 24Z" fill="#fbfbfb" stroke="#d0d0d0" stroke-width="0.8"/>
 <path d="M1.5 5.5L3.5 3" stroke="#555" stroke-width="1"/>
 <path d="M30.5 5.5L28.5 3" stroke="#555" stroke-width="1"/>
 <path d="M8 3.5H12.5L13 2.5" fill="none" stroke="#555" stroke-width="1"/>
 <path d="M19 2.5L19.5 3.5H24" fill="none" stroke="#555" stroke-width="1"/>
 <rect x="13" y="1.5" width="6" height="3" fill="#c8c8c8"/>
 <rect x="3.5" y="8" width="25" height="16" rx="1.5" fill="#ececec"/>
 <path d="M13 8H19V12H23V18H19V22H13V18H9V12H13Z" fill="#fff"/>
 <path d="M14 9H18V13H22V17H18V21H14V17H10V13H14Z" fill="#2db83d"/>
 <path d="M1.5 25.5H30.5" stroke="#8a8a8a" stroke-width="1"/>
</svg>
<div class="t" style="left:246px;top:105px;font-size:12px">Test &amp; Repair</div>

<div class="a" style="left:343px;top:69px;width:43px;height:33px;background:#e1e1e1;border:1px solid #adadad"></div>
<svg class="a" style="left:351px;top:70px" width="32" height="33" viewBox="0 0 32 33">
 <path d="M4 1H27L30 4V23L21 32H4L1 29V4Z" fill="#1a1a1a"/>
 <path d="M4 1.5H26L28.5 4V22L20 30.5H4L1.5 28V4Z" fill="#f6f6f6" stroke="#7a8898" stroke-width="1"/>
 <path d="M19.5 30.5Q19 23 28.5 22Z" fill="#d4d4d4" stroke="#9aa" stroke-width="0.6"/>
 <g font-family="Liberation Sans" font-weight="bold" font-size="6.6" fill="#2a2a2a">
 <text x="3" y="8.3" textLength="24" lengthAdjust="spacingAndGlyphs">010110</text>
 <text x="3" y="14.8" textLength="24" lengthAdjust="spacingAndGlyphs">110011</text>
 <text x="3" y="21.3" textLength="24" lengthAdjust="spacingAndGlyphs">101000</text>
 <text x="3" y="27.8" textLength="16" lengthAdjust="spacingAndGlyphs">0001</text>
 </g>
</svg>
<div class="t" style="left:337px;top:105px;font-size:12px">Disk Editor</div>

<div class="a" style="left:631px;top:69px;width:43px;height:33px;background:#e1e1e1;border:1px solid #adadad"></div>
<div class="a" style="left:648px;top:81px;width:4px;height:10px;background:#2b8fe8"></div>
<div class="a" style="left:654px;top:81px;width:4px;height:10px;background:#2b8fe8"></div>
<div class="t" style="left:635px;top:105px;font-size:12px">Pause</div>

<div class="a" style="left:705px;top:69px;width:43px;height:33px;background:#e1e1e1;border:1px solid #adadad"></div>
<div class="a" style="left:718px;top:77px;width:18px;height:18px;background:#ee3b36"></div>
<svg class="a" style="left:718px;top:77px" width="18" height="18" viewBox="0 0 18 18"><path d="M5 5L13 13M13 5L5 13" stroke="#fff" stroke-width="2.2"/></svg>
<div class="t" style="left:703px;top:105px;font-size:12px">Break All</div>
</body></html>
